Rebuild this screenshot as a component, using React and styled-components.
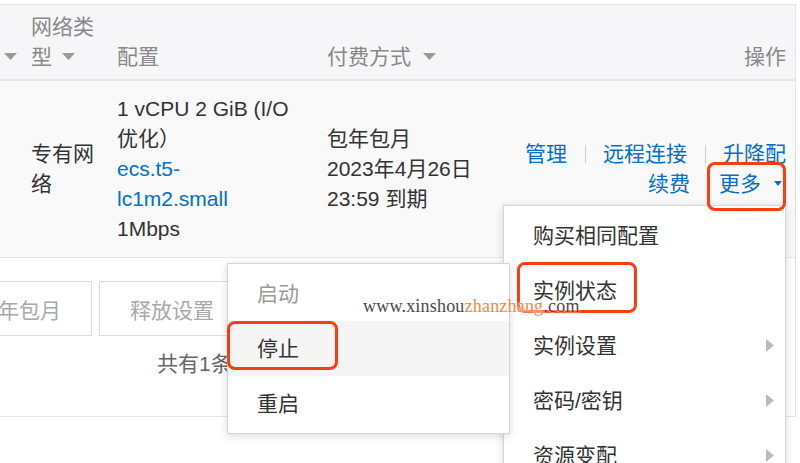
import React from "react";
import styled, { createGlobalStyle } from "styled-components";

const GlobalStyle = createGlobalStyle`
  html, body {
    margin: 0;
    padding: 0;
    background: #fff;
    overflow: hidden;
  }
  body {
    font-family: "Liberation Sans", "Noto Sans CJK SC", sans-serif;
  }
`;

const Page = styled.div`
  position: relative;
  width: 800px;
  height: 463px;
  overflow: hidden;
  padding-top: 4px;
  box-sizing: border-box;
  font-size: 21px;
  line-height: 30px;
`;

const Table = styled.div`
  width: 796px;
  border-top: 1px solid #e4e4e6;
  border-right: 1px solid #e4e4e6;
  border-bottom: 1px solid #e4e4e6;
  box-sizing: border-box;
`;

const cols = "31px 86px 210px 190px 1fr";

const HeadRow = styled.div`
  display: grid;
  grid-template-columns: ${cols};
  align-items: end;
  height: 76px;
  padding-bottom: 7px;
  box-sizing: border-box;
  background: #f6f6f8;
  border-bottom: 2px solid #e6e6e8;
  color: #888;
`;

const HeadCell = styled.div`
  padding-left: ${(p) => p.$pl || 0}px;
  padding-right: ${(p) => p.$pr || 0}px;
  text-align: ${(p) => (p.$right ? "right" : "left")};
  white-space: nowrap;
`;

const Arrow = styled.svg`
  display: inline-block;
  vertical-align: middle;
  margin-left: ${(p) => p.$ml || 0}px;
  margin-top: -3px;
`;

const SortArrow = ({ ml }) => (
  <Arrow $ml={ml} width="13" height="8" viewBox="0 0 13 8">
    <path d="M0 0 L13 0 L6.5 7 Z" fill="#999" />
  </Arrow>
);

const BodyRow = styled.div`
  display: grid;
  grid-template-columns: ${cols};
  align-items: center;
  height: 176px;
  background: #f9f9fa;
  border-bottom: 1px solid #e4e4e6;
  color: #333;
`;

const Cell = styled.div`
  white-space: nowrap;
  padding-right: ${(p) => p.$pr || 0}px;
`;

const Link = styled.a`
  color: #0070cc;
  text-decoration: none;
`;

const OpsLine = styled.div`
  display: flex;
  justify-content: flex-end;
  align-items: center;
  height: 30px;
`;

const Sep = styled.span`
  display: inline-block;
  width: 1px;
  height: 18px;
  background: #ccc;
  margin: 0 17px 0 18px;
`;

const More = styled.span`
  position: relative;
  display: inline-flex;
  align-items: center;
  height: 30px;
  margin-left: 29px;
  color: #0070cc;
`;

const Mark = styled.span`
  position: absolute;
  left: ${(p) => p.$l}px;
  top: ${(p) => p.$t}px;
  width: ${(p) => p.$w}px;
  height: ${(p) => p.$h}px;
  border: 3px solid #fc3d0f;
  border-radius: 8px;
  box-sizing: border-box;
  pointer-events: none;
  z-index: 5;
`;

const Footer = styled.div`
  height: 158px;
  padding-top: 23px;
  box-sizing: border-box;
`;

const Buttons = styled.div`
  display: flex;
  gap: 7px;
`;

const Btn = styled.button`
  height: 55px;
  padding: 0 30px;
  margin-left: ${(p) => p.$ml || 0}px;
  border: 1px solid #dcdcdc;
  background: #fff;
  color: #a8a8a8;
  font-family: inherit;
  font-size: 21px;
  white-space: nowrap;
`;

const Total = styled.div`
  margin-top: 13px;
  padding-left: 157px;
  color: #666;
`;

const Menu = styled.div`
  position: absolute;
  left: ${(p) => p.$l}px;
  top: ${(p) => p.$t}px;
  width: 283px;
  padding: 2px 0;
  background: #fff;
  border: 1px solid #d6d6d6;
  box-shadow: 0 2px 8px rgba(0, 0, 0, 0.15);
  box-sizing: border-box;
  z-index: ${(p) => p.$z};
`;

const Item = styled.div`
  position: relative;
  display: flex;
  align-items: center;
  justify-content: space-between;
  height: 55px;
  padding: 0 11px 0 29px;
  color: ${(p) => (p.$disabled ? "#999" : "#333")};
  background: ${(p) => (p.$active ? "#f5f5f5" : "transparent")};
`;

const SubArrow = () => (
  <svg width="8" height="13" viewBox="0 0 8 13">
    <path d="M0 0 L8 6.5 L0 13 Z" fill="#bbb" />
  </svg>
);

const Watermark = styled.div`
  position: absolute;
  left: 363px;
  top: 297px;
  font-family: "Liberation Serif", serif;
  font-size: 18px;
  line-height: 18px;
  letter-spacing: 0.2px;
  color: #4a4a4a;
  z-index: 6;
  text-shadow: 0 0 2px #fff, 0 0 2px #fff;
  white-space: nowrap;
`;

const Orange = styled.span`
  color: #f28a3e;
`;

export default function App() {
  return (
    <Page>
      <GlobalStyle />
      <Table>
        <HeadRow>
          <HeadCell $pl={4}>
            <SortArrow />
          </HeadCell>
          <HeadCell>
            网络类
            <br />型<SortArrow ml={10} />
          </HeadCell>
          <HeadCell>配置</HeadCell>
          <HeadCell>
            付费方式
            <SortArrow ml={12} />
          </HeadCell>
          <HeadCell $right $pr={9}>
            操作
          </HeadCell>
        </HeadRow>
        <BodyRow>
          <Cell />
          <Cell>
            专有网
            <br />络
          </Cell>
          <Cell>
            1 vCPU 2 GiB (I/O
            <br />
            优化）
            <br />
            <Link>ecs.t5-</Link>
            <br />
            <Link>lc1m2.small</Link>
            <br />
            1Mbps
          </Cell>
          <Cell>
            包年包月
            <br />
            2023年4月26日
            <br />
            23:59 到期
          </Cell>
          <Cell $pr={9}>
            <OpsLine>
              <Link>管理</Link>
              <Sep />
              <Link>远程连接</Link>
              <Sep />
              <Link>升降配</Link>
            </OpsLine>
            <OpsLine>
              <Link>续费</Link>
              <More>
                更多
                <svg width="8" height="6" viewBox="0 0 8 6" style={{ marginLeft: 13, marginRight: 4 }}>
                  <path d="M0 0 L8 0 L4 5 Z" fill="#0070cc" />
                </svg>
                <Mark $l={-12} $t={-7} $w={79} $h={49} />
              </More>
            </OpsLine>
          </Cell>
        </BodyRow>
        <Footer>
          <Buttons>
            <Btn $ml={-54}>包年包月</Btn>
            <Btn>释放设置</Btn>
          </Buttons>
          <Total>共有1条记录</Total>
        </Footer>
      </Table>

      <Menu $l={503} $t={205} $z={2}>
        <Item>购买相同配置</Item>
        <Item>
          实例状态
          <Mark $l={13} $t={-1} $w={120} $h={51} />
        </Item>
        <Item>
          实例设置
          <SubArrow />
        </Item>
        <Item>
          密码/密钥
          <SubArrow />
        </Item>
        <Item>
          资源变配
          <SubArrow />
        </Item>
      </Menu>

      <Menu $l={227} $t={263} $z={3}>
        <Item $disabled>启动</Item>
        <Item $active>
          停止
          <Mark $l={-1} $t={0} $w={111} $h={49} />
        </Item>
        <Item>重启</Item>
      </Menu>

      <Watermark>
        www.xinshou<Orange>zhanzhang</Orange>.com
      </Watermark>
    </Page>
  );
}
